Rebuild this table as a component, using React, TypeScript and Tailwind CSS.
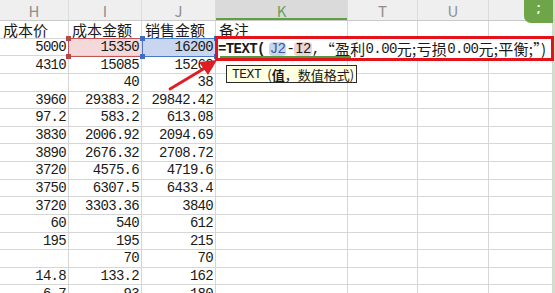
import React from "react";

const cols = [
  { key: "H", w: "w-[69px]" },
  { key: "I", w: "w-[73px]" },
  { key: "J", w: "w-[74px]" },
  { key: "K", w: "w-[132px]" },
  { key: "T", w: "w-[70px]" },
  { key: "U", w: "w-[71px]" },
  { key: "", w: "w-[64px]" },
];

const rows: string[][] = [
  ["5000", "15350", "16200"],
  ["4310", "15085", "15260"],
  ["", "40", "38"],
  ["3960", "29383.2", "29842.42"],
  ["97.2", "583.2", "613.08"],
  ["3830", "2006.92", "2094.69"],
  ["3890", "2676.32", "2708.72"],
  ["3720", "4575.6", "4719.6"],
  ["3750", "6307.5", "6433.4"],
  ["3720", "3303.36", "3840"],
  ["60", "540", "612"],
  ["195", "195", "215"],
  ["", "70", "70"],
  ["14.8", "133.2", "162"],
  ["6.7", "93", "180"],
];

const labels = ["成本价", "成本金额", "销售金额", "备注"];

const cjk = "font-['Noto_Sans_CJK_SC',sans-serif]";
const mono = "font-['Liberation_Mono','Noto_Sans_CJK_SC',monospace]";

function Corners({ color }: { color: string }) {
  return (
    <>
      <span className={`absolute -left-[3px] -top-[3px] h-[5px] w-[5px] ${color}`} />
      <span className={`absolute -right-[3px] -top-[3px] h-[5px] w-[5px] ${color}`} />
      <span className={`absolute -left-[3px] -bottom-[3px] h-[5px] w-[5px] ${color}`} />
      <span className={`absolute -right-[3px] -bottom-[3px] h-[5px] w-[5px] ${color}`} />
    </>
  );
}

export default function App() {
  return (
    <div className="relative h-[293px] w-[555px] overflow-hidden bg-white text-[#1a1a1a]">
      {/* column header */}
      <div className="flex h-[21px] border-b border-[#c9c9c9] bg-[#efefef]">
        {cols.map((c) => (
          <div
            key={c.w}
            className={`${c.w} flex shrink-0 items-center justify-center border-r border-[#dcdcdc] text-[15px] leading-none ${cjk} ${
              c.key === "K"
                ? "bg-[#dadada] text-[#62a35a] shadow-[inset_0_-2px_0_#5f9f45]"
                : "text-[#8e8e8e]"
            }`}
          >
            {c.key}
          </div>
        ))}
        <div className="w-[2px] bg-[#cfe4c2]" />
      </div>

      {/* label row */}
      <div className="flex h-[17.63px]">
        {cols.map((c, i) => (
          <div
            key={c.w}
            className={`${c.w} flex shrink-0 items-center overflow-visible whitespace-nowrap border-b border-r border-[#d6d6d6] pl-[3px] text-[15px] leading-none ${cjk}`}
          >
            {labels[i] ?? ""}
          </div>
        ))}
        <div className="w-[2px] bg-[#cfe4c2]" />
      </div>

      {rows.map((r, ri) => (
        <div key={ri} className="flex h-[17.63px]">
          {cols.map((c, ci) => (
            <div
              key={c.w}
              className={`${c.w} flex shrink-0 items-center justify-end border-b border-r border-[#d6d6d6] pr-[2px] text-[14px] leading-none tracking-[-0.7px] ${mono} ${
                ri === 0 && ci === 1 ? "bg-[#f3d9d9]" : ri === 0 && ci === 2 ? "bg-[#c8d6ef]" : ""
              }`}
            >
              {r[ci] ?? ""}
            </div>
          ))}
          <div className="w-[2px] bg-[#cfe4c2]" />
        </div>
      ))}

      {/* reference highlights */}
      <div className="absolute left-[68px] top-[38px] h-[19px] w-[75px] border border-[#c25454]">
        <Corners color="bg-[#b84848]" />
      </div>
      <div className="absolute left-[142px] top-[38px] h-[19px] w-[75px] border border-[#4a78c8]">
        <Corners color="bg-[#3f6fc4]" />
      </div>

      {/* formula being edited */}
      <div className="absolute left-[215px] top-[36px] flex h-[25px] w-[339px] items-center border-[3px] border-[#e3121b] bg-white">
        <div className="absolute bottom-0 left-[2px] h-[2px] w-[131px] bg-[#4f9a3c]" />
        <div className={`flex items-center whitespace-nowrap text-[15px] leading-none ${cjk}`}>
          <span className={`${mono} text-[14px] font-bold tracking-[-0.6px]`}>=TEXT(</span>
          <span className={`${mono} ml-[4px] rounded-[4px] bg-[#c9d6f0] px-[1px] text-[14px] tracking-[-0.6px] text-[#3d5b94]`}>J2</span>
          <span className={`${mono} text-[14px] tracking-[-0.6px]`}>-</span>
          <span className={`${mono} rounded-[4px] bg-[#f1d3d3] px-[1px] text-[14px] tracking-[-0.6px]`}>I2</span>
          <span className={`${mono} text-[14px] tracking-[-0.6px]`}>,</span>
          <span className="tracking-[0.3px]">“盈利</span>
          <span className={`${mono} text-[14px] tracking-[-0.6px]`}>0.00</span>
          <span className="tracking-[0.3px]">元;亏损</span>
          <span className={`${mono} text-[14px] tracking-[-0.6px]`}>0.00</span>
          <span className="tracking-[0.3px]">元;平衡;”)</span>
        </div>
      </div>

      {/* function hint */}
      <div className="absolute left-[226px] top-[65px] flex h-[18px] w-[131px] items-center whitespace-nowrap border border-[#2a2a2a] bg-[#ffffe1] pl-[5px] text-[13px] leading-none">
        <span className={`${mono} tracking-[-0.5px]`}>TEXT</span>
        <span className={`${cjk} ml-[6px]`}>(</span>
        <span className={`${cjk} font-bold`}>值</span>
        <span className={cjk}>，数值格式)</span>
      </div>

      {/* arrow */}
      <svg className="absolute left-0 top-0" width="555" height="293" viewBox="0 0 555 293">
        <line x1="170" y1="89" x2="205" y2="68" stroke="#e11d24" strokeWidth="2.8" strokeLinecap="round" />
        <polygon points="217,60 199,62 208,75" fill="#e11d24" />
      </svg>

      {/* floating tab */}
      <div className="absolute right-[2px] top-0 flex h-[23px] w-[29px] justify-center rounded-bl-[7px] bg-[#6ea548] pt-[1px] text-[13px] font-bold leading-none text-white">
        ;
      </div>
    </div>
  );
}
